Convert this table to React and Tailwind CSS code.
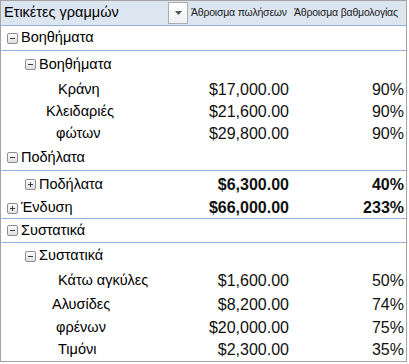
import React from 'react';

const rows = [
  { label: 'Βοηθήματα', box: 'minus', indent: 6, h: 25, line: true },
  { label: 'Βοηθήματα', box: 'minus', indent: 24, h: 27 },
  { label: 'Κράνη', indent: 57, h: 23, sales: '$17,000.00', score: '90%' },
  { label: 'Κλειδαριές', indent: 45, h: 22, sales: '$21,600.00', score: '90%' },
  { label: 'φώτων', indent: 55, h: 22, sales: '$29,800.00', score: '90%' },
  { label: 'Ποδήλατα', box: 'minus', indent: 6, h: 26, line: true },
  { label: 'Ποδήλατα', box: 'plus', indent: 24, h: 27, sales: '$6,300.00', score: '40%', bold: true },
  { label: 'Ένδυση', box: 'plus', indent: 6, h: 21, sales: '$66,000.00', score: '233%', bold: true, line: true },
  { label: 'Συστατικά', box: 'minus', indent: 6, h: 24, line: true },
  { label: 'Συστατικά', box: 'minus', indent: 24, h: 26 },
  { label: 'Κάτω αγκύλες', indent: 57, h: 24, sales: '$1,600.00', score: '50%' },
  { label: 'Αλυσίδες', indent: 51, h: 23, sales: '$8,200.00', score: '74%' },
  { label: 'φρένων', indent: 55, h: 23, sales: '$20,000.00', score: '75%' },
  { label: 'Τιμόνι', indent: 57, h: 22, sales: '$2,300.00', score: '35%' },
];

function ToggleBox({ type }) {
  return (
    <svg width="11" height="11" viewBox="0 0 11 11" className="shrink-0">
      <defs>
        <linearGradient id={'g' + type} x1="0" y1="0" x2="0" y2="1">
          <stop offset="0" stopColor="#ffffff" />
          <stop offset="1" stopColor="#d9dde3" />
        </linearGradient>
      </defs>
      <rect x="0.5" y="0.5" width="10" height="10" rx="1.5" fill={'url(#g' + type + ')'} stroke="#8a8f96" />
      <line x1="3" y1="5.5" x2="8" y2="5.5" stroke="#3a3a3a" strokeWidth="1" />
      {type === 'plus' && <line x1="5.5" y1="3" x2="5.5" y2="8" stroke="#3a3a3a" strokeWidth="1" />}
    </svg>
  );
}

export default function App() {
  return (
    <div className="w-[407px] h-[362px] border border-[#a3a3a3] bg-white font-['Liberation_Sans',Arial,sans-serif] text-black">
      <div className="h-[25px] flex bg-[#dce6f1] border-b border-[#95b3d7]">
        <div className="w-[189px] flex items-center justify-between pl-[3px] pr-[2px]">
          <span className="text-[14.5px]">Ετικέτες γραμμών</span>
          <div className="w-[20px] h-[22px] border border-[#acacac] bg-gradient-to-b from-white to-[#eef0f3] flex items-center justify-center">
            <svg width="7" height="4" viewBox="0 0 7 4">
              <path d="M0 0h7L3.5 4z" fill="#555" />
            </svg>
          </div>
        </div>
        <div className="w-[104px] flex items-center pl-[1px] text-[10.5px] tracking-[-0.2px] text-[#1a1a1a] whitespace-nowrap">
          Άθροισμα πωλήσεων
        </div>
        <div className="flex-1 flex items-center text-[10.5px] tracking-[-0.2px] text-[#1a1a1a] whitespace-nowrap">
          Άθροισμα βαθμολογίας
        </div>
      </div>
      {rows.map((r, i) => (
        <div
          key={i}
          style={{ height: r.h }}
          className={'flex items-center ' + (r.line ? 'border-b border-[#95b3d7]' : '')}
        >
          <div className="w-[189px] flex items-center text-[14.5px] whitespace-nowrap" style={{ paddingLeft: r.indent }}>
            {r.box && <ToggleBox type={r.box} />}
            <span className={r.box ? 'ml-[3px]' : ''}>{r.label}</span>
          </div>
          <div className={'w-[99px] text-right text-[16px] text-[#111] ' + (r.bold ? 'font-bold' : '')}>
            {r.sales}
          </div>
          <div className={'flex-1 text-right pr-[2px] text-[16px] text-[#111] ' + (r.bold ? 'font-bold' : '')}>
            {r.score}
          </div>
        </div>
      ))}
    </div>
  );
}
